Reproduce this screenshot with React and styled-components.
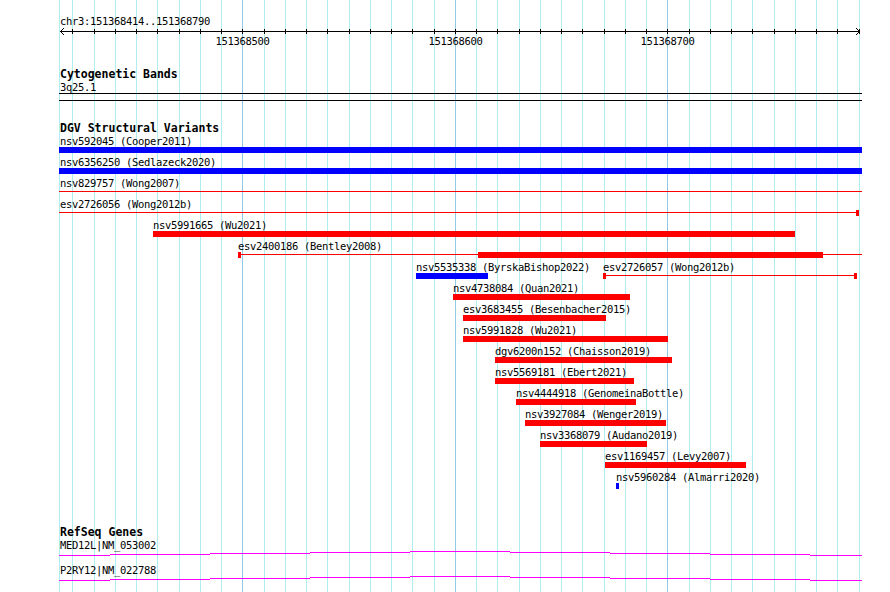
import React from 'react';
import styled, { createGlobalStyle } from 'styled-components';

const RED = '#ff0000';
const BLUE = '#0000ff';
const MAGENTA = '#ff00ff';

// the view starts at page x 59 and ends at 862
const ORIGIN = 59;
const VIEW_WIDTH = 803;
const px = (x) => x - ORIGIN;

// one grid line / ruler tick every 10 bp
const bpToPage = (bp) => Math.round(242.3 + (bp - 151368500) * 2.125);
const ticks = [];
for (let bp = 151368420; bp <= 151368790; bp += 10) {
    ticks.push({ bp, x: bpToPage(bp), major: bp % 100 === 0 });
}

const GlobalStyle = createGlobalStyle`
    html, body {
        margin: 0;
        padding: 0;
        background: #ffffff;
    }
    body {
        font-family: "DejaVu Sans Mono", "Liberation Mono", monospace;
        font-size: 10.5px;
        letter-spacing: -0.32px;
        color: #000000;
    }
`;

const Canvas = styled.div`
    position: relative;
    width: ${VIEW_WIDTH}px;
    height: 592px;
    margin-left: ${ORIGIN}px;
    overflow: hidden;
`;

const GridLayer = styled.div`
    position: absolute;
    inset: 0;
`;

const GridLine = styled.div`
    position: absolute;
    top: 0;
    bottom: 0;
    width: 1px;
    background: ${props => props.$major ? '#92c9e6' : '#aeeef0'};
`;

const Content = styled.div`
    position: relative;
    display: flex;
    flex-direction: column;
`;

const Locus = styled.div`
    position: relative;
    top: 1px;
    padding-top: 14px;
    padding-left: 1px;
    line-height: 12px;
    height: 12px;
    white-space: nowrap;
`;

const RulerSvg = styled.svg`
    display: block;
    overflow: visible;
`;

const TickLabels = styled.div`
    position: relative;
    height: 13px;
    line-height: 12px;
`;

const TickLabel = styled.span`
    position: absolute;
    top: 1px;
    transform: translateX(-50%);
    white-space: nowrap;
`;

const Track = styled.section`
    display: flex;
    flex-direction: column;
    margin-top: ${props => props.$gap}px;
`;

const TrackTitle = styled.div`
    font-weight: bold;
    font-size: 11.5px;
    letter-spacing: 0;
    line-height: 13px;
    height: 12px;
    padding-top: 1px;
    padding-left: 1px;
    white-space: nowrap;
`;

const Row = styled.div`
    position: relative;
    height: ${props => props.$height || 21}px;
`;

const Label = styled.span`
    position: absolute;
    top: 1px;
    line-height: 12px;
    white-space: nowrap;
`;

const Bar = styled.div`
    position: absolute;
    top: 13px;
    height: 6px;
    background: ${props => props.$color};
`;

const Connector = styled.div`
    position: absolute;
    top: 15px;
    height: 1px;
    background: ${props => props.$color};
`;

const Band = styled.div`
    position: absolute;
    top: 13px;
    left: 0;
    right: 0;
    height: 6px;
    border-top: 1px solid #000;
    border-bottom: 1px solid #000;
`;

const GeneSvg = styled.svg`
    position: absolute;
    top: 0;
    left: 0;
    overflow: visible;
`;

const Ruler = () => (
    <RulerSvg width={VIEW_WIDTH} height={8} shapeRendering="crispEdges">
        <line x1={1} y1={5.5} x2={801} y2={5.5} stroke="#000" />
        {ticks.map(t => (
            <line key={t.bp} x1={px(t.x) + 0.5} y1={3} x2={px(t.x) + 0.5} y2={8} stroke="#000" />
        ))}
        <polyline points="5,2 1.5,5.5 5,9" fill="none" stroke="#000" shapeRendering="auto" />
        <polyline points="797,2 800.5,5.5 797,9" fill="none" stroke="#000" shapeRendering="auto" />
    </RulerSvg>
);

// parts: [kind, from, to, colour] in page pixels
const variantRows = [
    [{ label: 'nsv592045 (Cooper2011)', x: 60, parts: [['bar', 59, 862, BLUE]] }],
    [{ label: 'nsv6356250 (Sedlazeck2020)', x: 60, parts: [['bar', 59, 862, BLUE]] }],
    [{ label: 'nsv829757 (Wong2007)', x: 60, parts: [['line', 59, 862, RED]] }],
    [{ label: 'esv2726056 (Wong2012b)', x: 60, parts: [['line', 59, 857, RED], ['bar', 856, 859, RED]] }],
    [{ label: 'nsv5991665 (Wu2021)', x: 153, parts: [['bar', 153, 795, RED]] }],
    [{ label: 'esv2400186 (Bentley2008)', x: 238, parts: [['bar', 238, 241, RED], ['line', 241, 862, RED], ['bar', 478, 823, RED]] }],
    [
        { label: 'nsv5535338 (ByrskaBishop2022)', x: 416, parts: [['bar', 416, 488, BLUE]] },
        { label: 'esv2726057 (Wong2012b)', x: 603, parts: [['bar', 603, 606, RED], ['line', 606, 854, RED], ['bar', 854, 857, RED]] },
    ],
    [{ label: 'nsv4738084 (Quan2021)', x: 453, parts: [['bar', 453, 630, RED]] }],
    [{ label: 'esv3683455 (Besenbacher2015)', x: 463, parts: [['bar', 463, 606, RED]] }],
    [{ label: 'nsv5991828 (Wu2021)', x: 463, parts: [['bar', 463, 668, RED]] }],
    [{ label: 'dgv6200n152 (Chaisson2019)', x: 495, parts: [['bar', 495, 672, RED]] }],
    [{ label: 'nsv5569181 (Ebert2021)', x: 495, parts: [['bar', 495, 634, RED]] }],
    [{ label: 'nsv4444918 (GenomeinaBottle)', x: 516, parts: [['bar', 516, 636, RED]] }],
    [{ label: 'nsv3927084 (Wenger2019)', x: 525, parts: [['bar', 525, 666, RED]] }],
    [{ label: 'nsv3368079 (Audano2019)', x: 540, parts: [['bar', 540, 647, RED]] }],
    [{ label: 'esv1169457 (Levy2007)', x: 605, parts: [['bar', 605, 746, RED]] }],
    [{ label: 'nsv5960284 (Almarri2020)', x: 616, parts: [['bar', 616, 619, BLUE]] }],
];

const genes = ['MED12L|NM_053002', 'P2RY12|NM_022788'];

// the gene line climbs one pixel every 100px and comes back down
const geneSteps = [59, 110, 210, 310, 410, 510, 610, 710, 810, 862];
const geneLevels = [17, 16, 15, 14, 13, 14, 15, 16, 17];
const genePath = geneLevels
    .map((y, i) => `M${px(geneSteps[i])},${y + 0.5} H${px(geneSteps[i + 1])}`)
    .join(' ');

const Part = ({ kind, from, to, color }) => {
    const Shape = kind === 'bar' ? Bar : Connector;
    return <Shape $color={color} style={{ left: px(from), width: to - from }} />;
};

const VariantRow = ({ features }) => (
    <Row>
        {features.map(f => (
            <React.Fragment key={f.label}>
                {f.parts.map(([kind, from, to, color], i) => (
                    <Part key={i} kind={kind} from={from} to={to} color={color} />
                ))}
                <Label style={{ left: px(f.x) }}>{f.label}</Label>
            </React.Fragment>
        ))}
    </Row>
);

const GeneRow = ({ name }) => (
    <Row $height={25}>
        <GeneSvg width={VIEW_WIDTH} height={25}>
            <path d={genePath} stroke={MAGENTA} strokeWidth={1} fill="none" shapeRendering="crispEdges" />
        </GeneSvg>
        <Label style={{ left: 1 }}>{name}</Label>
    </Row>
);

const App = () => (
    <>
        <GlobalStyle />
        <Canvas>
            <GridLayer>
                <GridLine style={{ left: 0 }} />
                {ticks.map(t => (
                    <GridLine key={t.bp} $major={t.major} style={{ left: px(t.x) }} />
                ))}
            </GridLayer>
            <Content>
                <Locus>chr3:151368414..151368790</Locus>
                <Ruler />
                <TickLabels>
                    {ticks.filter(t => t.major).map(t => (
                        <TickLabel key={t.bp} style={{ left: px(t.x) + 0.5 }}>{t.bp}</TickLabel>
                    ))}
                </TickLabels>

                <Track $gap={20}>
                    <TrackTitle>Cytogenetic Bands</TrackTitle>
                    <Row>
                        <Band />
                        <Label style={{ left: 1 }}>3q25.1</Label>
                    </Row>
                </Track>

                <Track $gap={20}>
                    <TrackTitle>DGV Structural Variants</TrackTitle>
                    {variantRows.map((features, i) => (
                        <VariantRow key={i} features={features} />
                    ))}
                </Track>

                <Track $gap={34}>
                    <TrackTitle>RefSeq Genes</TrackTitle>
                    {genes.map(name => (
                        <GeneRow key={name} name={name} />
                    ))}
                </Track>
            </Content>
        </Canvas>
    </>
);

export default App;
